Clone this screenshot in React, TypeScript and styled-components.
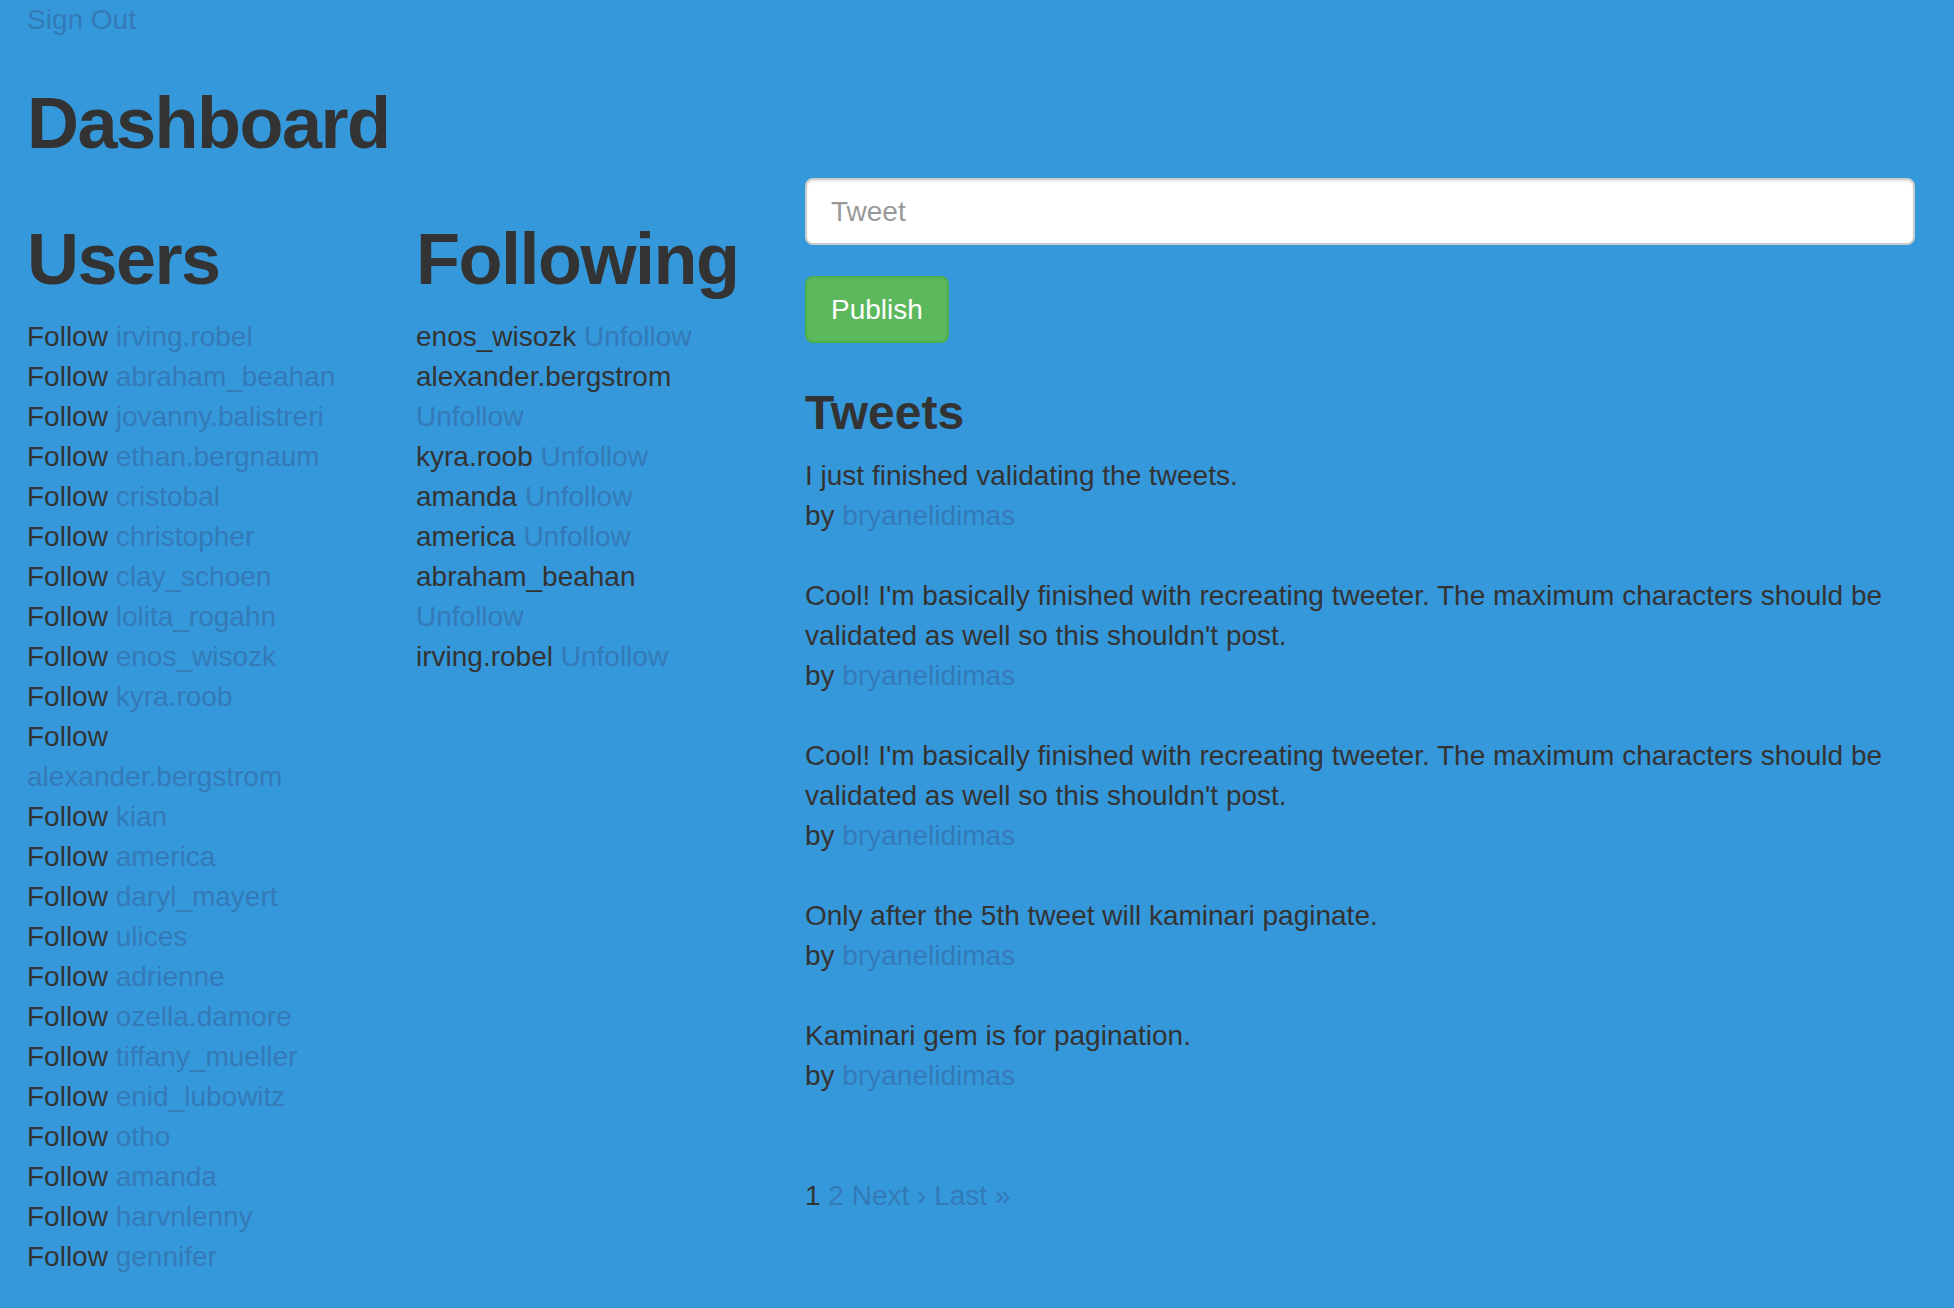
import React from "react";
import styled, { createGlobalStyle } from "styled-components";

const GlobalStyle = createGlobalStyle`
  html, body {
    margin: 0;
    padding: 0;
    background: #3598db;
  }
  body {
    font-family: "Liberation Sans", Arial, sans-serif;
    font-size: 28px;
    line-height: 40px;
    color: #333333;
  }
  * { box-sizing: border-box; }
`;

const Page = styled.div`
  min-height: 1308px;
  padding: 0 39px 0 27px;
`;

const Link = styled.a`
  color: #337ab7;
  text-decoration: none;
  cursor: pointer;
`;

const SignOut = styled(Link)`
  display: block;
  line-height: 40px;
`;

const Title = styled.h1`
  margin: 44px 0 15px;
  font-size: 72px;
  line-height: 79px;
  font-weight: 700;
  letter-spacing: -1.5px;
  color: #333333;
`;

const Columns = styled.div`
  display: grid;
  grid-template-columns: 329px 329px 1fr;
  column-gap: 60px;
  align-items: start;
`;

const Column = styled.section`
  display: flex;
  flex-direction: column;
  min-width: 0;
`;

const ColumnTitle = styled.h1`
  margin: 42px 0 18px;
  font-size: 72px;
  line-height: 79px;
  font-weight: 700;
  letter-spacing: -1.5px;
  color: #333333;
`;

const List = styled.div`
  display: flex;
  flex-direction: column;
`;

const Row = styled.div`
  line-height: 40px;
`;

const Dark = styled.span`
  color: #333333;
`;

const TweetInput = styled.input`
  display: block;
  width: 100%;
  height: 67px;
  padding: 0 24px;
  font-family: "Liberation Sans", Arial, sans-serif;
  font-size: 28px;
  color: #555555;
  background: #ffffff;
  border: 2px solid #cccccc;
  border-radius: 8px;
  box-shadow: inset 0 2px 2px rgba(0, 0, 0, 0.075);
  outline: none;
  &::placeholder {
    color: #999999;
  }
`;

const PublishButton = styled.button`
  align-self: flex-start;
  margin-top: 31px;
  height: 67px;
  padding: 0 24px;
  font-family: "Liberation Sans", Arial, sans-serif;
  font-size: 28px;
  color: #ffffff;
  background: #5cb85c;
  border: 2px solid #4cae4c;
  border-radius: 8px;
  cursor: pointer;
`;

const SectionTitle = styled.h3`
  margin: 43px 0 17px;
  font-size: 48px;
  line-height: 53px;
  font-weight: 700;
  color: #333333;
`;

const Tweet = styled.div`
  margin-bottom: 40px;
  line-height: 40px;
`;

const Pagination = styled.nav`
  margin-top: 40px;
  line-height: 40px;
`;

const users = [
  "irving.robel",
  "abraham_beahan",
  "jovanny.balistreri",
  "ethan.bergnaum",
  "cristobal",
  "christopher",
  "clay_schoen",
  "lolita_rogahn",
  "enos_wisozk",
  "kyra.roob",
  "alexander.bergstrom",
  "kian",
  "america",
  "daryl_mayert",
  "ulices",
  "adrienne",
  "ozella.damore",
  "tiffany_mueller",
  "enid_lubowitz",
  "otho",
  "amanda",
  "harvnlenny",
  "gennifer",
];

const following = [
  "enos_wisozk",
  "alexander.bergstrom",
  "kyra.roob",
  "amanda",
  "america",
  "abraham_beahan",
  "irving.robel",
];

const cool =
  "Cool! I'm basically finished with recreating tweeter. The maximum characters should be validated as well so this shouldn't post.";

const tweets = [
  "I just finished validating the tweets.",
  cool,
  cool,
  "Only after the 5th tweet will kaminari paginate.",
  "Kaminari gem is for pagination.",
];

export default function App() {
  return (
    <>
      <GlobalStyle />
      <Page>
        <SignOut>Sign Out</SignOut>
        <Title>Dashboard</Title>
        <Columns>
          <Column>
            <ColumnTitle>Users</ColumnTitle>
            <List>
              {users.map((u) => (
                <Row key={u}>
                  <Dark>Follow</Dark> <Link>{u}</Link>
                </Row>
              ))}
            </List>
          </Column>
          <Column>
            <ColumnTitle>Following</ColumnTitle>
            <List>
              {following.map((u) => (
                <Row key={u}>
                  <Dark>{u}</Dark> <Link>Unfollow</Link>
                </Row>
              ))}
            </List>
          </Column>
          <Column>
            <TweetInput placeholder="Tweet" />
            <PublishButton>Publish</PublishButton>
            <SectionTitle>Tweets</SectionTitle>
            {tweets.map((t, i) => (
              <Tweet key={i}>
                <div>{t}</div>
                <div>
                  by <Link>bryanelidimas</Link>
                </div>
              </Tweet>
            ))}
            <Pagination>
              <Dark>1</Dark> <Link>2</Link> <Link>Next ›</Link>{" "}
              <Link>Last »</Link>
            </Pagination>
          </Column>
        </Columns>
      </Page>
    </>
  );
}
